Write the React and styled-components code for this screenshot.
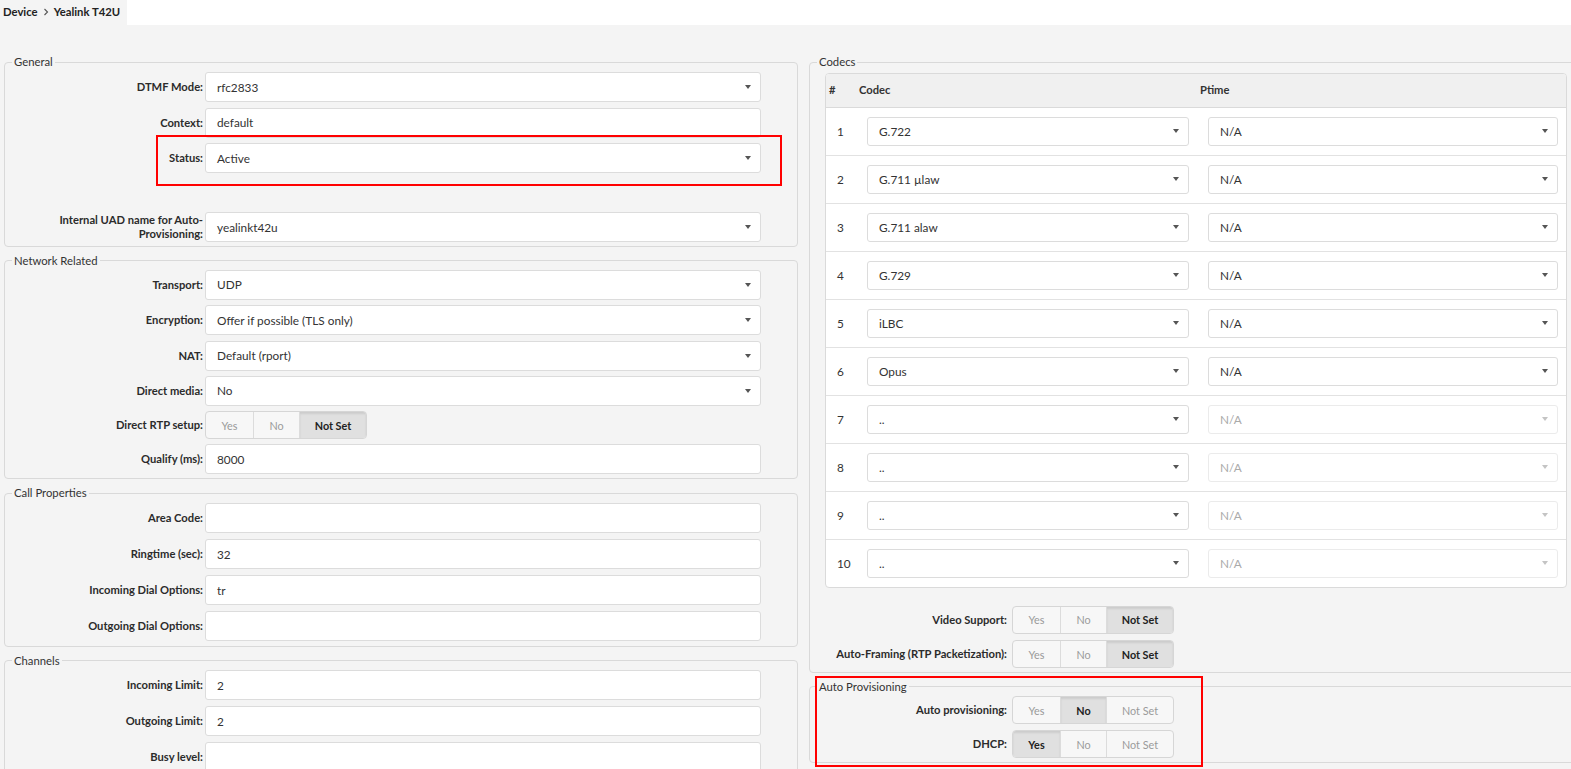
import React from "react";
import styled, { createGlobalStyle, css } from "styled-components";

const GlobalStyle = createGlobalStyle`
  html, body { margin: 0; padding: 0; background: #f4f4f4; overflow: hidden; }
  body { font-family: Lato, "Liberation Sans", Arial, sans-serif; color: #333; font-size: 12px; }
  * { box-sizing: border-box; }
`;

const Page = styled.div`
  width: 1571px;
  height: 769px;
  overflow: hidden;
  background: #f4f4f4;
`;

const TopBar = styled.header`
  height: 25px;
  background: #fff;
  display: flex;
`;

const Crumbs = styled.nav`
  width: 127px;
  flex: none;
  white-space: nowrap;
  background: #f4f4f4;
  display: flex;
  align-items: center;
  gap: 5px;
  padding: 0 0 2px 3px;
  font-weight: 700;
  font-size: 11.3px;
  color: #222;
`;

const Content = styled.main`
  display: grid;
  grid-template-columns: 794px 772px;
  column-gap: 11px;
  align-items: start;
  padding: 29px 0 0 4px;
`;

const Column = styled.div`
  display: flex;
  flex-direction: column;
  gap: 6px;
`;

const marker = css`
  &::after {
    content: "";
    position: absolute;
    border: 2px solid #f00;
    pointer-events: none;
  }
`;

const Fieldset = styled.fieldset`
  margin: 0;
  min-width: 0;
  padding: ${(p) => p.$pad || "1.5px 0 4px"};
  border: 1px solid #d9d9d9;
  border-radius: 4px;
  position: relative;
  ${(p) =>
    p.$marked &&
    css`
      ${marker}
      &::after {
        left: 5px;
        top: -18.8px;
        width: 384px;
        height: 86.6px;
      }
    `}
`;

const Legend = styled.legend`
  margin-left: 7px;
  padding: 0 2px;
  font-size: 11.3px;
  line-height: 16px;
  color: #333;
`;

const Rows = styled.div`
  display: flex;
  flex-direction: column;
  gap: ${(p) => p.$gap}px;
  margin-top: ${(p) => p.$mt || 0}px;
`;

const FormRow = styled.div`
  display: grid;
  grid-template-columns: ${(p) => (p.$wide ? "197px 556px" : "198px 556px")};
  column-gap: ${(p) => (p.$wide ? 5 : 2)}px;
  align-items: center;
  position: relative;
  ${(p) =>
    p.$marked &&
    css`
      ${marker}
      &::after {
        left: 150.7px;
        top: -7.6px;
        width: 622.6px;
        height: 46.3px;
      }
    `}
`;

const Label = styled.label`
  text-align: right;
  font-weight: 700;
  font-size: 11.2px;
  line-height: 14px;
  color: #2b2b2b;
`;

const Field = styled.div`
  height: ${(p) => p.$h || 30}px;
  width: 100%;
  background: #fff;
  border: 1px solid ${(p) => (p.$disabled ? "#ebebeb" : "#dcdcdc")};
  border-radius: 3px;
  padding: 0 9px 0 11px;
  display: flex;
  align-items: center;
  font-size: 11.8px;
  color: ${(p) => (p.$disabled ? "#aaa" : "#333")};
  white-space: nowrap;
`;

const Caret = styled.span`
  margin-left: auto;
  width: 0;
  height: 0;
  border-left: 3.5px solid transparent;
  border-right: 3.5px solid transparent;
  border-top: 4px solid ${(p) => (p.$disabled ? "#c4c4c4" : "#555")};
`;

const Spacer = styled.div`
  height: ${(p) => p.$h}px;
`;

const ToggleGroup = styled.div`
  display: inline-flex;
  justify-self: start;
  height: 28px;
  border: 1px solid #d6d6d6;
  border-radius: 4px;
  overflow: hidden;
  background: #f7f7f7;
`;

const ToggleBtn = styled.span`
  width: ${(p) => p.$w}px;
  display: flex;
  align-items: center;
  justify-content: center;
  font-size: 10.8px;
  color: #9a9a9a;
  & + & {
    border-left: 1px solid #dcdcdc;
  }
  ${(p) =>
    p.$active &&
    css`
      background: #e0e0e0;
      color: #222;
      font-weight: 700;
      box-shadow: inset 0 2px 2px rgba(0, 0, 0, 0.09);
    `}
`;

const TableWrap = styled.div`
  margin: 0 13px 0 15px;
`;

const Table = styled.table`
  width: 100%;
  table-layout: fixed;
  border-collapse: separate;
  border-spacing: 0;
  background: #fff;
  border: 1px solid #dadada;
  border-radius: 4px;
  overflow: hidden;
  th:nth-child(1) { width: 30px; }
  th:nth-child(2) { width: 341px; }
`;

const Th = styled.th`
  background: #f0f0f0;
  text-align: left;
  font-weight: 700;
  font-size: 11.2px;
  line-height: 14px;
  padding: 9.5px 3px;
  border-bottom: 1px solid #dadada;
  color: #333;
`;

const Tr = styled.tr`
  &:not(:last-child) td {
    border-bottom: 1px solid #e2e2e2;
  }
`;

const Td = styled.td`
  padding: 9px 8px 9px 11px;
  font-size: 11.8px;
  color: #333;
  vertical-align: middle;
  ${(p) => p.$num && css`padding-right: 0;`}
`;

const Chevron = () => (
  <svg width="6" height="8" viewBox="0 0 6 8" aria-hidden="true">
    <path d="M1.5 1 L4.5 4 L1.5 7" fill="none" stroke="#555" strokeWidth="1.1" />
  </svg>
);

const Select = ({ value, disabled, h }) => (
  <Field $disabled={disabled} $h={h}>
    {value}
    <Caret $disabled={disabled} />
  </Field>
);

const Input = ({ value }) => <Field>{value}</Field>;

const Toggle = ({ value }) => {
  const opts = [
    ["Yes", 47],
    ["No", 46],
    ["Not Set", 67],
  ];
  return (
    <ToggleGroup>
      {opts.map(([t, w]) => (
        <ToggleBtn key={t} $w={w} $active={t === value}>
          {t}
        </ToggleBtn>
      ))}
    </ToggleGroup>
  );
};

const Row = ({ label, children, marked, wide }) => (
  <FormRow $marked={marked} $wide={wide}>
    <Label>{label}</Label>
    {children}
  </FormRow>
);

const codecs = [
  ["G.722", "N/A", false],
  ["G.711 µlaw", "N/A", false],
  ["G.711 alaw", "N/A", false],
  ["G.729", "N/A", false],
  ["iLBC", "N/A", false],
  ["Opus", "N/A", false],
  ["..", "N/A", true],
  ["..", "N/A", true],
  ["..", "N/A", true],
  ["..", "N/A", true],
];

export default function App() {
  return (
    <Page>
      <GlobalStyle />
      <TopBar>
        <Crumbs>
          <span>Device</span>
          <Chevron />
          <span>Yealink T42U</span>
        </Crumbs>
      </TopBar>
      <Content>
        <Column>
          <Fieldset $pad="2.3px 0 3.7px">
            <Legend>General</Legend>
            <Rows $gap={5.4}>
              <Row label="DTMF Mode:">
                <Select value="rfc2833" />
              </Row>
              <Row label="Context:">
                <Input value="default" />
              </Row>
              <Row label="Status:" marked>
                <Select value="Active" />
              </Row>
              <Spacer $h={28.4} />
              <Row label="Internal UAD name for Auto-Provisioning:">
                <Select value="yealinkt42u" />
              </Row>
            </Rows>
          </Fieldset>

          <Fieldset $pad="1px 0 4px">
            <Legend>Network Related</Legend>
            <Rows $gap={5.3}>
              <Row label="Transport:">
                <Select value="UDP" />
              </Row>
              <Row label="Encryption:">
                <Select value="Offer if possible (TLS only)" />
              </Row>
              <Row label="NAT:">
                <Select value="Default (rport)" />
              </Row>
              <Row label="Direct media:">
                <Select value="No" />
              </Row>
              <Row label="Direct RTP setup:">
                <Toggle value="Not Set" />
              </Row>
              <Row label="Qualify (ms):">
                <Input value="8000" />
              </Row>
            </Rows>
          </Fieldset>

          <Fieldset $pad="1.5px 0 4.5px">
            <Legend>Call Properties</Legend>
            <Rows $gap={6.2}>
              <Row label="Area Code:">
                <Input value="" />
              </Row>
              <Row label="Ringtime (sec):">
                <Input value="32" />
              </Row>
              <Row label="Incoming Dial Options:">
                <Input value="tr" />
              </Row>
              <Row label="Outgoing Dial Options:">
                <Input value="" />
              </Row>
            </Rows>
          </Fieldset>

          <Fieldset>
            <Legend>Channels</Legend>
            <Rows $gap={6}>
              <Row label="Incoming Limit:">
                <Input value="2" />
              </Row>
              <Row label="Outgoing Limit:">
                <Input value="2" />
              </Row>
              <Row label="Busy level:">
                <Input value="" />
              </Row>
            </Rows>
          </Fieldset>
        </Column>

        <Column>
          <Fieldset $pad="2.7px 0 3.5px">
            <Legend>Codecs</Legend>
            <TableWrap>
              <Table>
                <thead>
                  <tr>
                    <Th>#</Th>
                    <Th>Codec</Th>
                    <Th>Ptime</Th>
                  </tr>
                </thead>
                <tbody>
                  {codecs.map(([c, p, dis], i) => (
                    <Tr key={i}>
                      <Td $num>{i + 1}</Td>
                      <Td>
                        <Select value={c} h={29} />
                      </Td>
                      <Td>
                        <Select value={p} h={29} disabled={dis} />
                      </Td>
                    </Tr>
                  ))}
                </tbody>
              </Table>
            </TableWrap>
            <Rows $gap={6.7} $mt={18}>
              <Row wide label="Video Support:">
                <Toggle value="Not Set" />
              </Row>
              <Row wide label="Auto-Framing (RTP Packetization):">
                <Toggle value="Not Set" />
              </Row>
            </Rows>
          </Fieldset>

          <Fieldset $pad="1.5px 0 4px" $marked>
            <Legend>Auto Provisioning</Legend>
            <Rows $gap={6}>
              <Row wide label="Auto provisioning:">
                <Toggle value="No" />
              </Row>
              <Row wide label="DHCP:">
                <Toggle value="Yes" />
              </Row>
            </Rows>
          </Fieldset>
        </Column>
      </Content>
    </Page>
  );
}
